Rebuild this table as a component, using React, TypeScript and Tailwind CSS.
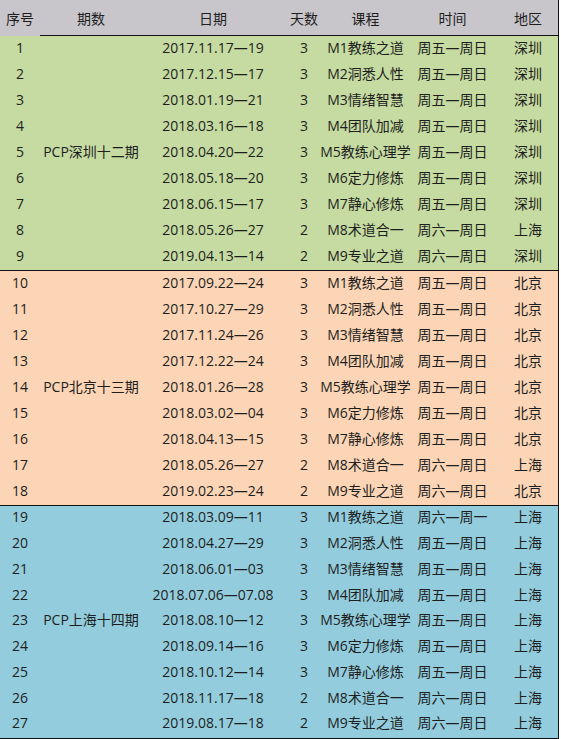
import React from "react";

type Row = [string, string, string, string, string, string];

const groups: { name: string; bg: string; rowH: string; rows: Row[] }[] = [
  {
    name: "PCP深圳十二期",
    bg: "bg-[#c5dba1]",
    rowH: "h-[26px]",
    rows: [
      ["1", "2017.11.17—19", "3", "M1教练之道", "周五—周日", "深圳"],
      ["2", "2017.12.15—17", "3", "M2洞悉人性", "周五—周日", "深圳"],
      ["3", "2018.01.19—21", "3", "M3情绪智慧", "周五—周日", "深圳"],
      ["4", "2018.03.16—18", "3", "M4团队加减", "周五—周日", "深圳"],
      ["5", "2018.04.20—22", "3", "M5教练心理学", "周五—周日", "深圳"],
      ["6", "2018.05.18—20", "3", "M6定力修炼", "周五—周日", "深圳"],
      ["7", "2018.06.15—17", "3", "M7静心修炼", "周五—周日", "深圳"],
      ["8", "2018.05.26—27", "2", "M8术道合一", "周六—周日", "上海"],
      ["9", "2019.04.13—14", "2", "M9专业之道", "周六—周日", "深圳"],
    ],
  },
  {
    name: "PCP北京十三期",
    bg: "bg-[#fbd5b5]",
    rowH: "h-[26px]",
    rows: [
      ["10", "2017.09.22—24", "3", "M1教练之道", "周五—周日", "北京"],
      ["11", "2017.10.27—29", "3", "M2洞悉人性", "周五—周日", "北京"],
      ["12", "2017.11.24—26", "3", "M3情绪智慧", "周五—周日", "北京"],
      ["13", "2017.12.22—24", "3", "M4团队加减", "周五—周日", "北京"],
      ["14", "2018.01.26—28", "3", "M5教练心理学", "周五—周日", "北京"],
      ["15", "2018.03.02—04", "3", "M6定力修炼", "周五—周日", "北京"],
      ["16", "2018.04.13—15", "3", "M7静心修炼", "周五—周日", "北京"],
      ["17", "2018.05.26—27", "2", "M8术道合一", "周六—周日", "上海"],
      ["18", "2019.02.23—24", "2", "M9专业之道", "周六—周日", "北京"],
    ],
  },
  {
    name: "PCP上海十四期",
    bg: "bg-[#93cddd]",
    rowH: "h-[25.75px]",
    rows: [
      ["19", "2018.03.09—11", "3", "M1教练之道", "周六—周一", "上海"],
      ["20", "2018.04.27—29", "3", "M2洞悉人性", "周五—周日", "上海"],
      ["21", "2018.06.01—03", "3", "M3情绪智慧", "周五—周日", "上海"],
      ["22", "2018.07.06—07.08", "3", "M4团队加减", "周五—周日", "上海"],
      ["23", "2018.08.10—12", "3", "M5教练心理学", "周五—周日", "上海"],
      ["24", "2018.09.14—16", "3", "M6定力修炼", "周五—周日", "上海"],
      ["25", "2018.10.12—14", "3", "M7静心修炼", "周五—周日", "上海"],
      ["26", "2018.11.17—18", "2", "M8术道合一", "周六—周日", "上海"],
      ["27", "2019.08.17—18", "2", "M9专业之道", "周六—周日", "上海"],
    ],
  },
];

const cols = "grid grid-cols-[40px_102px_142px_40px_83px_91px_60px]";
const headers = ["期数", "日期", "天数", "课程", "时间", "地区"];

export default function App() {
  return (
    <div
      className="w-[561px] h-[739px] bg-white text-[14px] text-[#1e1e1e] leading-none"
      style={{ fontFamily: '"Open Sans", "Noto Sans CJK SC", sans-serif' }}
    >
      <div className="w-[559px] border-r-[1.5px] border-b-[1.5px] border-[#111]">
        <div className={`${cols} h-[36px] bg-[#c8c5cb] pt-[2px]`}>
          <div className="flex items-center justify-center">序号</div>
          {headers.map((h) => (
            <div key={h} className="flex items-center justify-center border-b-[1.5px] border-[#111]">
              {h}
            </div>
          ))}
        </div>
        {groups.map((g, gi) => (
          <div
            key={g.name}
            className={`${cols} ${g.bg} ${gi < groups.length - 1 ? "border-b-[1.5px] border-[#111]" : ""}`}
          >
            {g.rows.map((r, ri) => (
              <React.Fragment key={r[0]}>
                <div className={`${g.rowH} flex items-center justify-center pb-[3px]`}>{r[0]}</div>
                {ri === 0 && (
                  <div className="row-span-9 flex items-center justify-center pb-[3px]">{g.name}</div>
                )}
                {r.slice(1).map((c, ci) => (
                  <div key={ci} className={`${g.rowH} flex items-center justify-center pb-[3px] whitespace-nowrap`}>
                    {c}
                  </div>
                ))}
              </React.Fragment>
            ))}
          </div>
        ))}
      </div>
    </div>
  );
}
